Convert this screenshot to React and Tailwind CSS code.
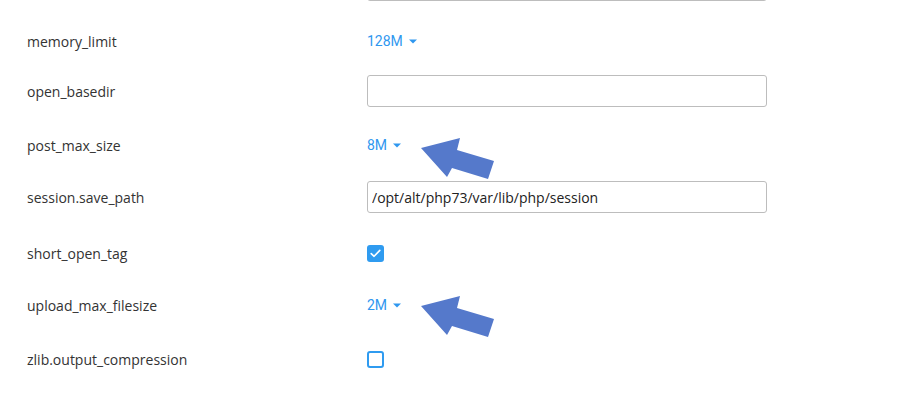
import { useState } from "react";

const BLUE = "text-[#2f97ef]";

function Caret() {
  return (
    <svg width="8" height="5" viewBox="0 0 8 5" className="ml-[6px]">
      <path d="M0 0.5 L8 0.5 L4 4.5 Z" fill="#2f97ef" />
    </svg>
  );
}

function SizeSelect({ value }) {
  return (
    <button
      className={`flex items-center text-[14px] ${BLUE}`}
      style={{ fontFamily: "Roboto, 'Liberation Sans', sans-serif" }}
    >
      {value}
      <Caret />
    </button>
  );
}

function TextInput({ value = "" }) {
  return (
    <input
      readOnly
      value={value}
      className="w-[400px] h-8 px-[4px] rounded-[3px] border border-[#bdbdbd] bg-white text-[14px] text-[#222] outline-none"
    />
  );
}

function Checkbox({ checked }) {
  const [on, setOn] = useState(checked);
  return (
    <button
      onClick={() => setOn((v) => !v)}
      className={`w-[17px] h-[17px] rounded-[3px] flex items-center justify-center ${
        on ? "bg-[#2f9bf0]" : "border-2 border-[#2f9bf0] bg-white"
      }`}
    >
      {on && (
        <svg width="11" height="9" viewBox="0 0 11 9">
          <path d="M1.2 4.6 L4.1 7.3 L9.8 1.4" fill="none" stroke="white" strokeWidth="1.6" strokeLinecap="round" strokeLinejoin="round" />
        </svg>
      )}
    </button>
  );
}

function Row({ label, pad = "", children }) {
  return (
    <div className={`flex items-center h-8 ${pad}`}>
      <div className="w-[340px] text-[14px] text-[#333]">{label}</div>
      <div className="flex items-center">{children}</div>
    </div>
  );
}

function Arrow() {
  return (
    <svg width="76" height="44" viewBox="0 0 76 44">
      <path d="M0 10 L39 0 L36 12 L73 23 L67 41 L31 30 L26 39 Z" fill="#5579cb" />
    </svg>
  );
}

export default function App() {
  return (
    <div
      className="relative w-[901px] h-[404px] overflow-hidden bg-white"
      style={{ fontFamily: "'Open Sans', 'Noto Sans', sans-serif" }}
    >
      <div className="flex flex-col gap-[21px] pl-[27px] -mt-[31px]">
        <Row label="">
          <TextInput />
        </Row>
        <Row label="memory_limit" pad="pt-[6px]">
          <SizeSelect value="128M" />
        </Row>
        <Row label="open_basedir">
          <TextInput />
        </Row>
        <Row label="post_max_size" pad="pt-[3px]">
          <SizeSelect value="8M" />
        </Row>
        <Row label="session.save_path">
          <TextInput value="/opt/alt/php73/var/lib/php/session" />
        </Row>
        <Row label="short_open_tag" pad="pt-[7px]">
          <Checkbox checked />
        </Row>
        <Row label="upload_max_filesize" pad="pt-[4px]">
          <SizeSelect value="2M" />
        </Row>
        <Row label="zlib.output_compression" pad="pt-[7px]">
          <Checkbox checked={false} />
        </Row>
      </div>

      {/* annotation arrows */}
      <div className="absolute left-[421px] top-[138px]">
        <Arrow />
      </div>
      <div className="absolute left-[421px] top-[296px]">
        <Arrow />
      </div>
    </div>
  );
}
